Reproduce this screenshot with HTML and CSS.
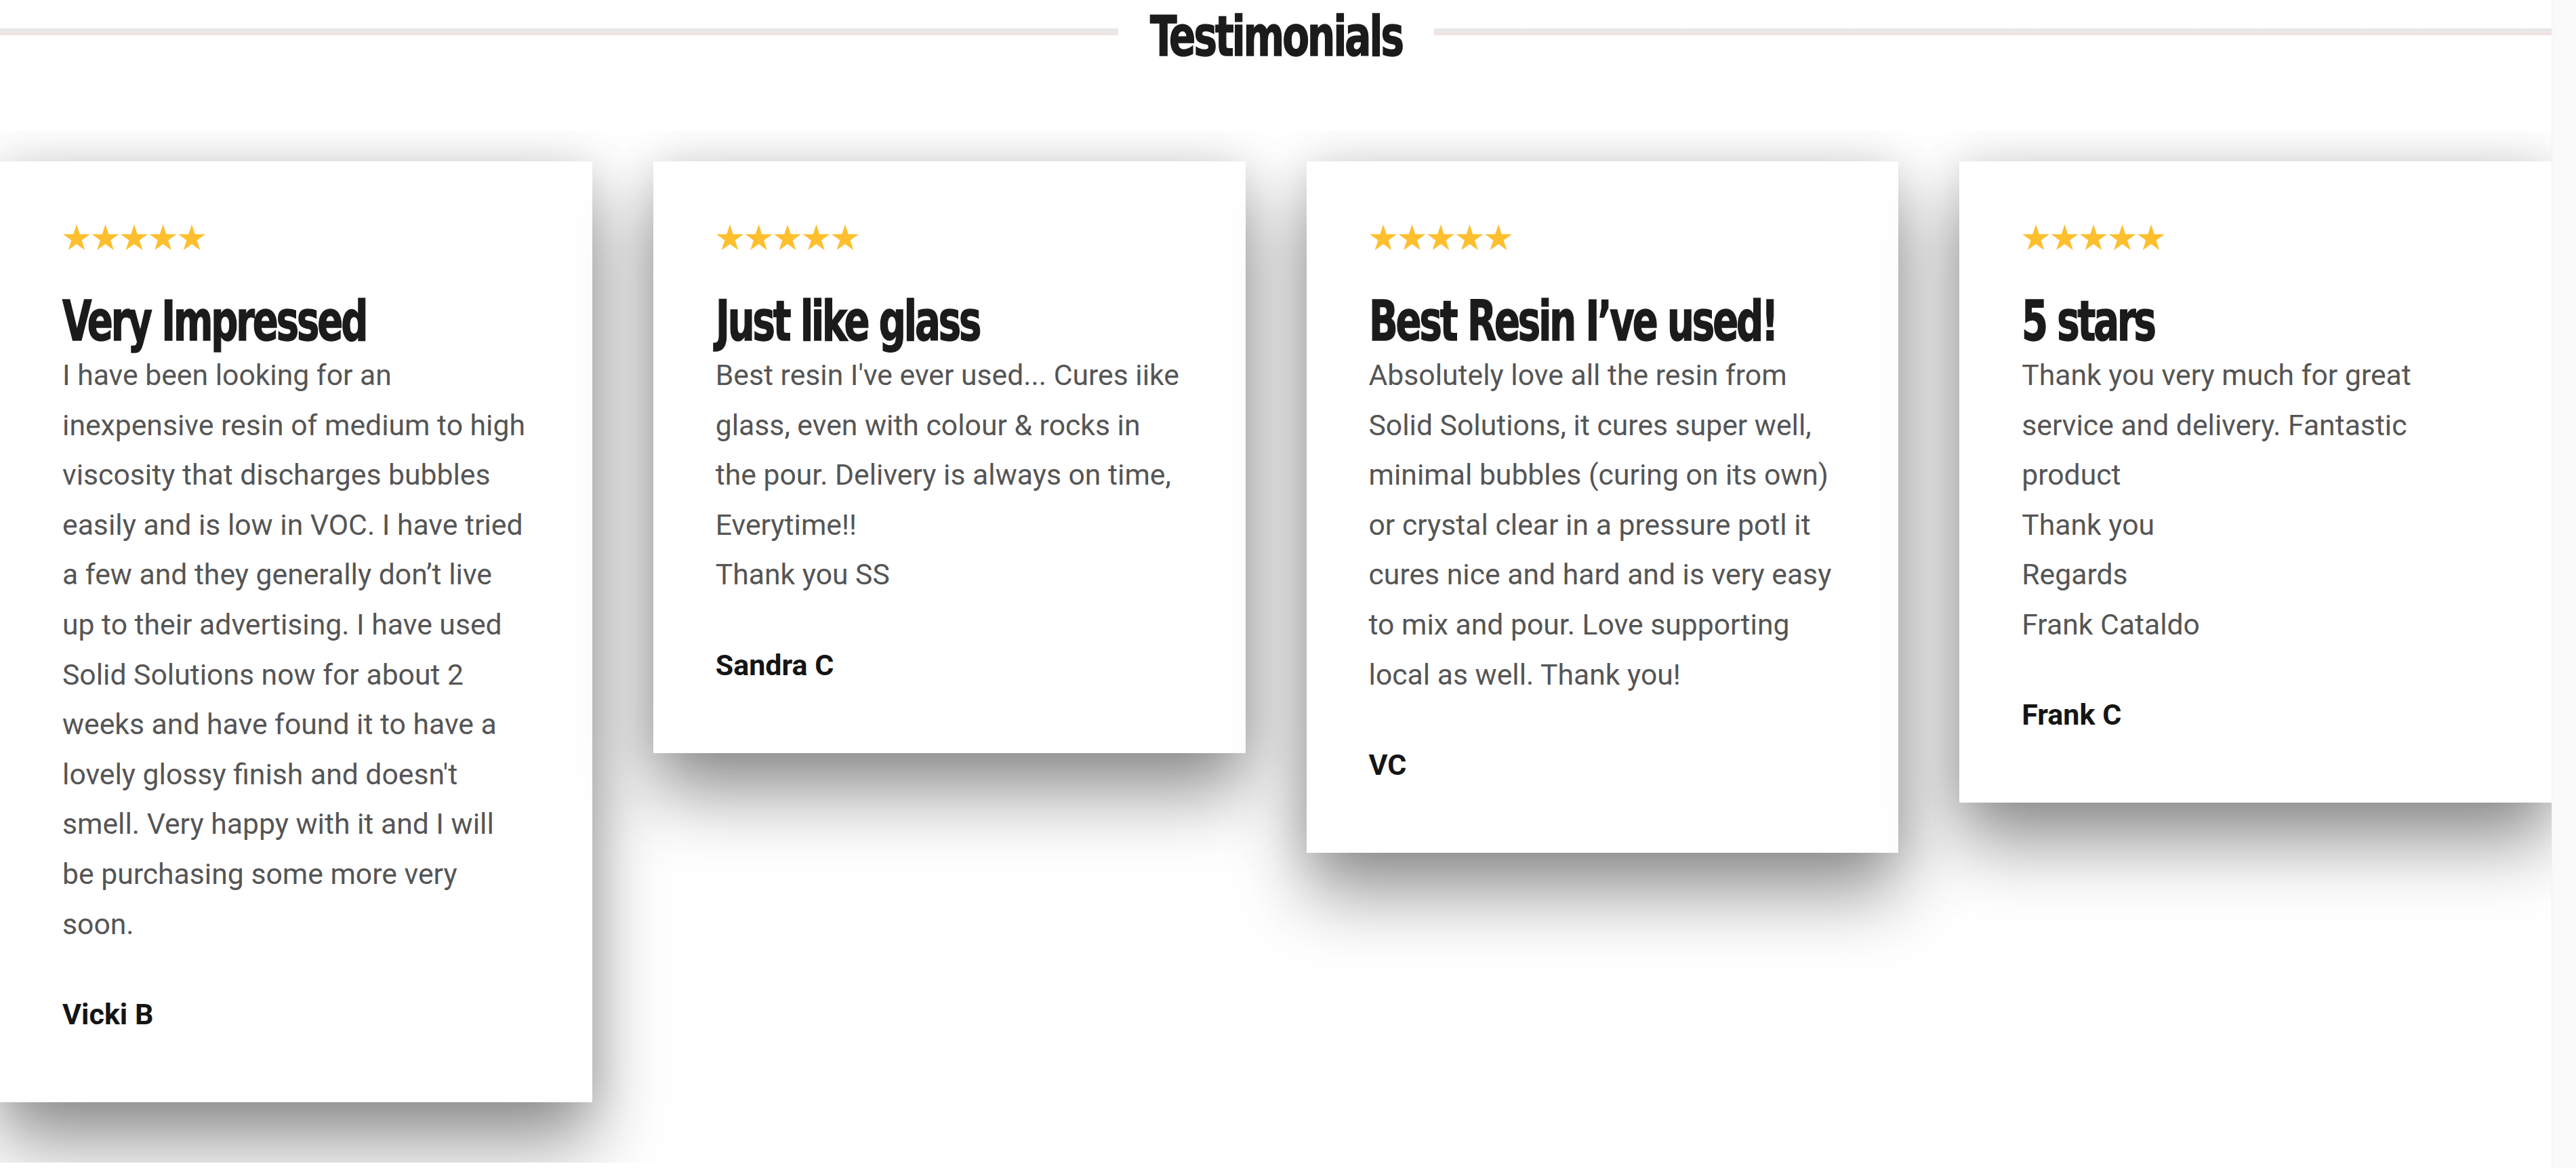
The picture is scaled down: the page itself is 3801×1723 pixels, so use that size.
FILE: index.html
```html
<!DOCTYPE html>
<html lang="en">
<head>
<meta charset="utf-8">
<title>Testimonials</title>
<link rel="stylesheet" href="styles.css">
</head>
<body>
<svg class="defs" width="0" height="0" aria-hidden="true">
  <defs>
    <symbol id="star" viewBox="0 0 42 40">
      <polygon points="21,1 25.71,15.51 40.97,15.51 28.63,24.48 33.34,38.99 21,30.02 8.66,38.99 13.37,24.48 1.03,15.51 16.29,15.51"/>
    </symbol>
  </defs>
</svg>
<div class="page">
  <main class="main">
    <header class="header">
      <div class="rule"></div>
      <h2 class="title"><span class="squeeze squeeze-center">Testimonials</span></h2>
      <div class="rule"></div>
    </header>
    <section class="carousel">
      <div class="track">
        <article class="card">
          <svg class="stars" viewBox="0 0 212 40"><use href="#star" x="0" width="42" height="40"/><use href="#star" x="42.5" width="42" height="40"/><use href="#star" x="85" width="42" height="40"/><use href="#star" x="127.5" width="42" height="40"/><use href="#star" x="170" width="42" height="40"/></svg>
          <h3 class="card-title"><span class="squeeze">Very Impressed</span></h3>
          <p class="quote">I have been looking for an<br>inexpensive resin of medium to high<br>viscosity that discharges bubbles<br>easily and is low in VOC. I have tried<br>a few and they generally don’t live<br>up to their advertising. I have used<br>Solid Solutions now for about 2<br>weeks and have found it to have a<br>lovely glossy finish and doesn't<br>smell. Very happy with it and I will<br>be purchasing some more very<br>soon.</p>
          <p class="author">Vicki B</p>
        </article>
        <article class="card">
          <svg class="stars" viewBox="0 0 212 40"><use href="#star" x="0" width="42" height="40"/><use href="#star" x="42.5" width="42" height="40"/><use href="#star" x="85" width="42" height="40"/><use href="#star" x="127.5" width="42" height="40"/><use href="#star" x="170" width="42" height="40"/></svg>
          <h3 class="card-title"><span class="squeeze">Just like glass</span></h3>
          <p class="quote">Best resin I've ever used... Cures iike<br>glass, even with colour &amp; rocks in<br>the pour. Delivery is always on time,<br>Everytime!!<br>Thank you SS</p>
          <p class="author">Sandra C</p>
        </article>
        <article class="card">
          <svg class="stars" viewBox="0 0 212 40"><use href="#star" x="0" width="42" height="40"/><use href="#star" x="42.5" width="42" height="40"/><use href="#star" x="85" width="42" height="40"/><use href="#star" x="127.5" width="42" height="40"/><use href="#star" x="170" width="42" height="40"/></svg>
          <h3 class="card-title"><span class="squeeze">Best Resin I’ve used!</span></h3>
          <p class="quote">Absolutely love all the resin from<br>Solid Solutions, it cures super well,<br>minimal bubbles (curing on its own)<br>or crystal clear in a pressure potl it<br>cures nice and hard and is very easy<br>to mix and pour. Love supporting<br>local as well. Thank you!</p>
          <p class="author">VC</p>
        </article>
        <article class="card">
          <svg class="stars" viewBox="0 0 212 40"><use href="#star" x="0" width="42" height="40"/><use href="#star" x="42.5" width="42" height="40"/><use href="#star" x="85" width="42" height="40"/><use href="#star" x="127.5" width="42" height="40"/><use href="#star" x="170" width="42" height="40"/></svg>
          <h3 class="card-title"><span class="squeeze">5 stars</span></h3>
          <p class="quote">Thank you very much for great<br>service and delivery. Fantastic<br>product<br>Thank you<br>Regards<br>Frank Cataldo</p>
          <p class="author">Frank C</p>
        </article>
      </div>
    </section>
  </main>
  <div class="scroll-track"></div>
</div>
</body>
</html>
```

FILE: styles.css
```css
* {
  box-sizing: border-box;
  margin: 0;
  padding: 0;
}

html, body {
  background: #ffffff;
}

body {
  font-family: Roboto, "Liberation Sans", sans-serif;
  overflow: hidden;
}

.defs {
  position: absolute;
  width: 0;
  height: 0;
}

.page {
  display: grid;
  grid-template-columns: minmax(0, 1fr) 36px;
  min-height: 1723px;
}

.main {
  min-width: 0;
}

.scroll-track {
  background: #fafafa;
  border-left: 1px solid #f1f1f1;
}

.header {
  display: flex;
  align-items: flex-start;
  height: 193px;
  background: #ffffff;
}

.rule {
  flex: 1;
  height: 10px;
  margin-top: 42px;
  background: linear-gradient(#e1e5e8 0%, #ebe8e8 45%, #f2e1e1 100%);
}

.squeeze {
  display: inline-block;
  transform: scaleX(0.76);
  transform-origin: left center;
  -webkit-text-stroke: 1.5px currentColor;
}

.squeeze-center {
  transform: scaleX(0.785);
  transform-origin: center center;
}

.title {
  font-family: "Liberation Sans Narrow", "Arial Narrow", "DejaVu Sans Condensed", sans-serif;
  font-stretch: condensed;
  font-weight: 700;
  font-size: 82px;
  line-height: 86px;
  letter-spacing: -0.045em;
  color: #1b1b1b;
  margin: 11px -4px 0;
}

.carousel {
  height: 1522px;
  overflow: hidden;
  padding-top: 45px;
}

.track {
  display: grid;
  grid-template-columns: repeat(4, minmax(0, 1fr));
  column-gap: 90px;
  align-items: start;
}

.card {
  background: #ffffff;
  padding: 92px 92px 107px;
  box-shadow: 0 60px 100px rgba(0, 0, 0, 0.42), 0 0 60px rgba(0, 0, 0, 0.12);
}

.stars {
  display: block;
  width: 212px;
  height: 40px;
  fill: #fdbf2d;
}

.card-title {
  font-family: "Liberation Sans Narrow", "Arial Narrow", "DejaVu Sans Condensed", sans-serif;
  font-stretch: condensed;
  font-weight: 700;
  font-size: 82px;
  line-height: 86px;
  letter-spacing: -0.05em;
  color: #1b1b1b;
  margin-top: 61px;
  white-space: nowrap;
}

.quote {
  font-size: 42.7px;
  line-height: 73.6px;
  color: #555555;
  white-space: nowrap;
}

.author {
  margin-top: 72.6px;
  font-size: 43px;
  line-height: 46px;
  font-weight: 700;
  color: #151515;
}
```
